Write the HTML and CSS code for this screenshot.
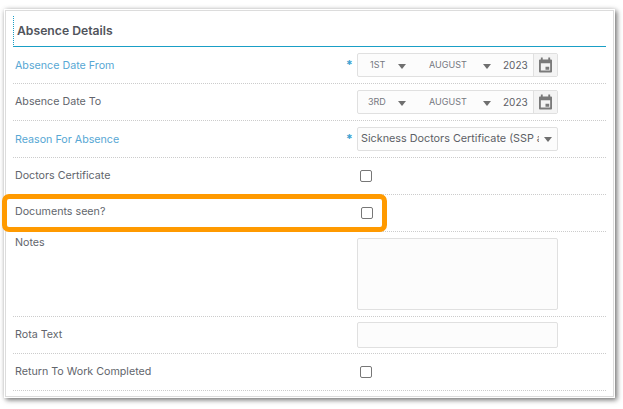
FILE: index.html
```html
<!DOCTYPE html>
<html lang="en">
<head>
<meta charset="utf-8">
<title>Absence Details</title>
<link rel="stylesheet" href="styles.css">
</head>
<body>
<main class="panel">
  <h2 class="title">Absence Details</h2>
  <div class="row">
    <span class="label req">Absence Date From</span><span class="star">*</span>
    <div class="field date">
      <span class="part day">1ST</span><i class="caret c1"></i>
      <span class="part month">AUGUST</span><i class="caret c2"></i>
      <span class="year">2023</span>
      <span class="cal"><svg width="13" height="16" viewBox="0 0 14 16"><path fill="#7a7a7a" d="M2 0h2v2h6V0h2v2h1a1 1 0 0 1 1 1v12a1 1 0 0 1-1 1H1a1 1 0 0 1-1-1V3a1 1 0 0 1 1-1h1zM2 6v8h10V6zm5 4h4v3H7z"/></svg></span>
    </div>
  </div>
  <div class="row">
    <span class="label">Absence Date To</span><span class="star"></span>
    <div class="field date">
      <span class="part day alt">3RD</span><i class="caret c1"></i>
      <span class="part month">AUGUST</span><i class="caret c2"></i>
      <span class="year">2023</span>
      <span class="cal"><svg width="13" height="16" viewBox="0 0 14 16"><path fill="#7a7a7a" d="M2 0h2v2h6V0h2v2h1a1 1 0 0 1 1 1v12a1 1 0 0 1-1 1H1a1 1 0 0 1-1-1V3a1 1 0 0 1 1-1h1zM2 6v8h10V6zm5 4h4v3H7z"/></svg></span>
    </div>
  </div>
  <div class="row">
    <span class="label req">Reason For Absence</span><span class="star">*</span>
    <div class="field select">
      <span class="sel-text">Sickness Doctors Certificate (SSP applies)</span><i class="caret"></i>
    </div>
  </div>
  <div class="row">
    <span class="label">Doctors Certificate</span><span class="star"></span>
    <input class="check" type="checkbox" aria-label="Doctors Certificate">
  </div>
  <div class="row">
    <span class="label high">Documents seen?</span><span class="star"></span>
    <input class="check nudged" type="checkbox" aria-label="Documents seen?">
  </div>
  <div class="row notes">
    <span class="label high">Notes</span><span class="star"></span>
    <textarea class="field area" aria-label="Notes"></textarea>
  </div>
  <div class="row">
    <span class="label">Rota Text</span><span class="star"></span>
    <input class="field text" type="text" aria-label="Rota Text">
  </div>
  <div class="row">
    <span class="label">Return To Work Completed</span><span class="star"></span>
    <input class="check" type="checkbox" aria-label="Return To Work Completed">
  </div>
  <div class="highlight"></div>
</main>
</body>
</html>
```
FILE: styles.css
```css
html, body {
  margin: 0;
  padding: 0;
  background: #fff;
}
body {
  width: 623px;
  height: 409px;
  overflow: hidden;
  font-family: Inter, "Liberation Sans", sans-serif;
  color: #5c5f66;
}
.panel {
  position: relative;
  box-sizing: border-box;
  width: 609px;
  height: 387px;
  margin: 10px 0 0 5px;
  padding: 5px 7px 0 7px;
  border: 1px solid #dcdcdc;
  background: #fff;
  box-shadow: 0 0 0 1px #fff, 2px 2px 5px 1px #777, 0 0 5px #ccc;
}
.title {
  box-sizing: border-box;
  height: 31px;
  margin: 0;
  padding: 7px 0 0 3px;
  border-bottom: 1px solid #1a9fc6;
  border-left: 1px dotted #1a9fc6;
  font-size: 12.2px;
  line-height: 16px;
  font-weight: 600;
  color: #51545c;
}
.row {
  box-sizing: border-box;
  height: 37px;
  display: grid;
  grid-template-columns: 331px 11px 201px;
  align-items: center;
  padding-left: 2px;
  border-bottom: 1px dotted #ccc;
}
.label {
  font-size: 10.7px;
  line-height: 14px;
  margin-top: 0;
  color: #62656c;
}
.label.req {
  margin-top: 2px;
  color: #57a7d4;
}
.label.high { margin-top: -2px; }
.star {
  font-size: 12px;
  font-weight: 700;
  color: #3a9fd0;
  line-height: 12px;
}
.field {
  box-sizing: border-box;
  width: 201px;
  border: 1px solid #e0e0e0;
  border-radius: 2px;
  background: #fcfcfc;
  margin: 0;
  padding: 0;
}
.date, .select {
  position: relative;
  height: 24px;
}
.part {
  position: absolute;
  top: 5px;
  font-size: 9px;
  line-height: 12px;
  color: #75787f;
}
.day { left: 12px; }
.day.alt { left: 10px; }
.month { left: 71px; }
.caret {
  position: absolute;
  top: 10px;
  width: 0;
  height: 0;
  border-left: 4.5px solid transparent;
  border-right: 4.5px solid transparent;
  border-top: 5px solid #6f6f6f;
}
.c1 { left: 40px; }
.c2 { left: 125px; }
.year {
  position: absolute;
  left: 145px;
  top: 5px;
  font-size: 10px;
  line-height: 13px;
  color: #5c5f66;
}
.cal {
  position: absolute;
  right: 0;
  top: 0;
  box-sizing: border-box;
  width: 24px;
  height: 22px;
  border-left: 1px solid #e0e0e0;
  background: #f4f4f4;
  display: flex;
  align-items: center;
  justify-content: center;
}
.select .sel-text {
  position: absolute;
  left: 3px;
  top: 3px;
  width: 178px;
  overflow: hidden;
  white-space: nowrap;
  font-size: 10.8px;
  line-height: 15px;
  color: #5c5f66;
}
.select .caret {
  right: 5px;
  left: auto;
  top: 9px;
}
.check {
  appearance: none;
  box-sizing: border-box;
  width: 12px;
  height: 12px;
  margin: 0 0 0 3px;
  border: 1px solid #777;
  border-radius: 2px;
  background: #fff;
}
.check.nudged { margin-left: 4px; }
.notes {
  height: 85px;
  align-items: start;
  padding-top: 6px;
}
.area {
  display: block;
  height: 72px;
  resize: none;
  outline: none;
}
.text {
  height: 26px;
  outline: none;
}
.highlight {
  position: absolute;
  left: -4px;
  top: 183px;
  box-sizing: border-box;
  width: 385px;
  height: 38px;
  border: 5px solid #ff9a00;
  border-radius: 7px;
  pointer-events: none;
}
```
